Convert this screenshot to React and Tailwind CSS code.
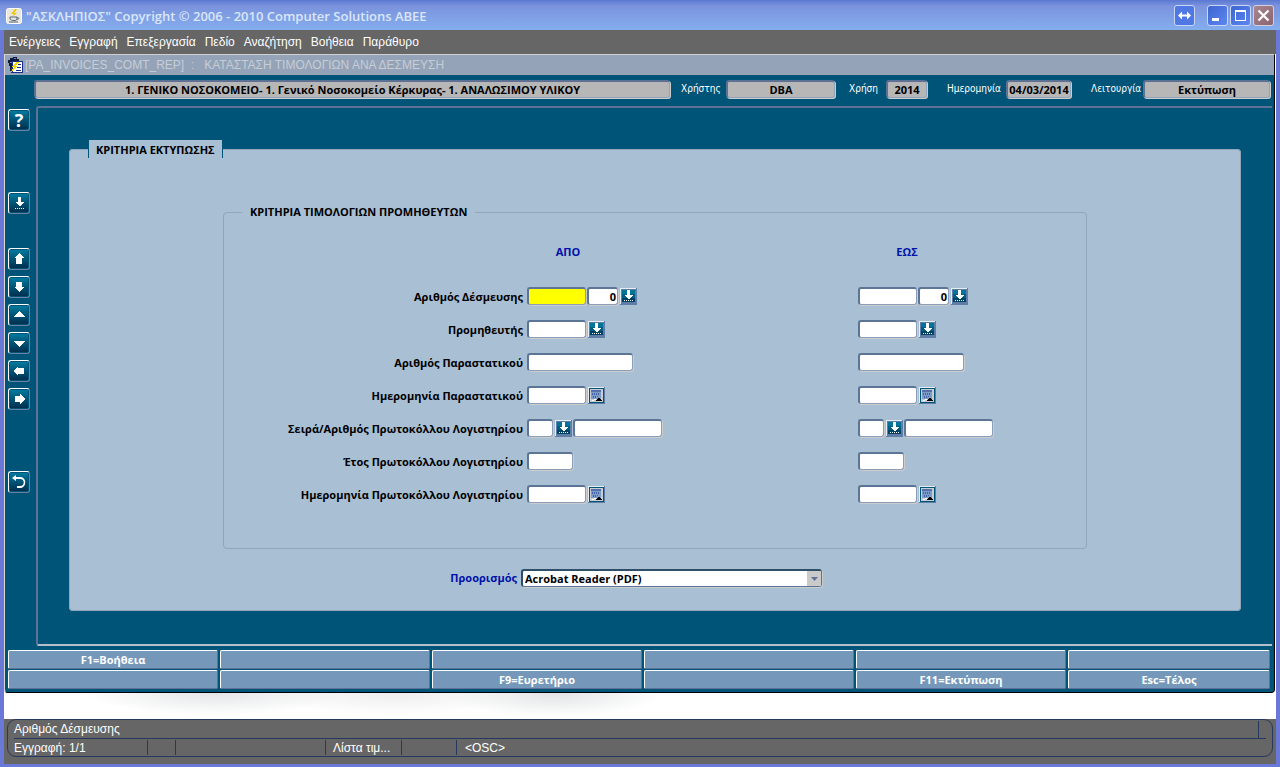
import { useState } from "react";

const MENU = ["Ενέργειες", "Εγγραφή", "Επεξεργασία", "Πεδίο", "Αναζήτηση", "Βοήθεια", "Παράθυρο"];

const FUNCTION_KEYS = [
  "F1=Βοήθεια", "", "", "", "", "",
  "", "", "F9=Ευρετήριο", "", "F11=Εκτύπωση", "Esc=Τέλος",
];

const ROWS = [
  { id: "commitment", label: "Αριθμός Δέσμευσης", parts: ["code", "count", "list"] },
  { id: "supplier", label: "Προμηθευτής", parts: ["code", "list"] },
  { id: "document", label: "Αριθμός Παραστατικού", parts: ["number"] },
  { id: "documentDate", label: "Ημερομηνία Παραστατικού", parts: ["code", "calendar"] },
  { id: "protocol", label: "Σειρά/Αριθμός Πρωτοκόλλου Λογιστηρίου", parts: ["series", "list", "protocol"] },
  { id: "protocolYear", label: "Έτος Πρωτοκόλλου Λογιστηρίου", parts: ["year"] },
  { id: "protocolDate", label: "Ημερομηνία Πρωτοκόλλου Λογιστηρίου", parts: ["code", "calendar"] },
];

const FIELD_WIDTHS = {
  code: "w-[59px]",
  count: "w-[31px]",
  number: "w-[106px]",
  series: "w-[26px]",
  protocol: "w-[89px]",
  year: "w-[46px]",
};

const SIDE_ICONS = {
  list: (
    <>
      <path d="M10 5h3v5h3l-4.500 4.500L7 10h3z" />
      <path d="M7 16h1v1H7zM9 16h1v1H9zM11 16h1v1h-1zM13 16h1v1h-1zM15 16h1v1h-1z" />
    </>
  ),
  up: <path d="M11 5l5 5h-2v6H8v-6H6z" />,
  down: <path d="M8 6h6v5h2l-5 5-5-5h2z" />,
  pageUp: <path d="M11 7l6 6H5z" />,
  pageDown: <path d="M5 9h12l-6 6z" />,
  left: <path d="M5 11l5-5v2h6v6h-6v2z" />,
  right: <path d="M17 11l-5-5v2H7v6h5v2z" />,
  back: <path d="M4 7l4-3v2h4c7 0 7 11 0 11H9v-2h3c5 0 5-7 0-7H8v2z" />,
};

function SideButton({ label, icon }) {
  return (
    <button
      type="button"
      aria-label={label}
      className="flex h-[22px] w-[22px] items-center justify-center rounded-[3px] border border-t-white border-l-white border-r-[#6f7fa0] border-b-[#6f7fa0] bg-[#00547a] p-px"
    >
      <span className="flex h-[18px] w-[18px] items-center justify-center bg-linear-to-b from-[#007a9e] to-[#00304f] text-lg font-bold text-white">
        {icon === "help" ? (
          "?"
        ) : (
          <svg viewBox="2 2 18 18" className="h-[18px] w-[18px]" fill="#fff" shapeRendering={icon === "back" ? "auto" : "crispEdges"}>
            {SIDE_ICONS[icon]}
          </svg>
        )}
      </span>
    </button>
  );
}

function InfoField({ id, label, value, width }) {
  return (
    <>
      {label && (
        <label htmlFor={id} className="font-['DejaVu_Sans_Condensed','DejaVu_Sans',sans-serif] text-[10px] text-white">
          {label}
        </label>
      )}
      <input
        id={id}
        aria-label={label || "Τμήμα"}
        readOnly
        value={value}
        className={`h-[18px] rounded-[3px] border-t-2 border-l-2 border-r border-b border-t-[#5c7194] border-l-[#5c7194] border-r-[#93a4bd] border-b-[#93a4bd] bg-[#b7b7b7] text-center font-bold text-black shadow-[1px_1px_0_#cccccc] ${width}`}
      />
    </>
  );
}

function ListButton({ label }) {
  return (
    <button type="button" aria-label={label} className="mx-px mt-px h-[17px] w-[17px]">
      <svg viewBox="0 0 17 17" className="h-[17px] w-[17px]" shapeRendering="crispEdges">
        <path d="M0 0h17v17H0z" fill="#5f7da6" />
        <path d="M0 0h16v1H1v15H0z" fill="#e6eef5" />
        <path d="M2 2h13v5H2z" fill="#007499" />
        <path d="M2 6h13v5H2z" fill="#005d84" />
        <path d="M2 10h13v4H2z" fill="#004264" />
        <path d="M7 2h3v5h3l-4.500 4.500L4 7h3z" fill="#fff" />
        <path d="M4 12h1v1H4zM6 12h1v1H6zM8 12h1v1H8zM10 12h1v1h-1zM12 12h1v1h-1z" fill="#fff" />
      </svg>
    </button>
  );
}

function CalendarButton({ label }) {
  return (
    <button type="button" aria-label={label} className="mx-px mt-px h-[17px] w-[17px]">
      <svg viewBox="0 0 17 17" className="h-[17px] w-[17px]" shapeRendering="crispEdges">
        <path d="M0 0h17v17H0z" fill="#5f7da6" />
        <path d="M0 0h16v1H1v15H0z" fill="#e6eef5" />
        <path d="M1 1h15v15H1z" fill="#005478" />
        <path d="M2 2h13v13H2z" fill="#c9cdd2" />
        <path d="M3 3h10v9H3z" fill="#7d9cc8" />
        <path d="M3 3h10v2H3z" fill="#5470ad" />
        <path d="M4 6h1v2H4zM6 6h1v2H6zM8 6h1v2H8zM10 6h1v2h-1zM5 9h1v2H5zM7 9h1v2H7zM9 9h1v1H9z" fill="#4665a8" />
        <path d="M7 14l3.500-3.500L14 14z" fill="#000" />
        <path d="M6 12h2v1H6zM4 13h2v1H4z" fill="#fff" />
      </svg>
    </button>
  );
}

function RangeCell({ row, side, values, onChange }) {
  return (
    <div className="flex h-[19px] items-start">
      {row.parts.map((part, i) => {
        const key = `${row.id}-${side}-${part}`;
        if (part === "list") return <ListButton key={key} label={`Λίστα ${row.label}`} />;
        if (part === "calendar") return <CalendarButton key={key} label={`Ημερολόγιο ${row.label}`} />;
        const active = key === "commitment-from-code";
        return (
          <input
            key={key}
            id={i === 0 ? `${row.id}-${side}` : key}
            aria-label={`${row.label} ${side === "from" ? "ΑΠΟ" : "ΕΩΣ"}`}
            value={values[key] ?? (part === "count" ? "0" : "")}
            onChange={(e) => onChange(key, e.target.value)}
            className={`mr-px h-[18px] rounded-[3px] border-t-2 border-l-2 border-r border-b border-t-[#5c7597] border-l-[#5c7597] border-r-[#8b9db8] border-b-[#8b9db8] px-px text-right font-bold text-black shadow-[1px_1px_0_#cccccc] outline-none ${active ? "bg-[#ffff00]" : "bg-white"} ${FIELD_WIDTHS[part]}`}
          />
        );
      })}
    </div>
  );
}

function TitleBar() {
  return (
    <header className="flex h-[30px] items-center bg-linear-to-b from-[#5a78d0] via-[#7b93dd] via-20% to-[#84aeee] pt-px pr-[6px] pl-[6px]">
      <svg viewBox="0 0 16 16" className="mr-1 h-4 w-4" aria-hidden="true">
        <rect x="0.500" y="0.500" width="15" height="15" rx="2" fill="#e9e6dc" stroke="#fff" />
        <path d="M9 1L5 6h3L6 9l5-4H8l3-4z" fill="#f2c400" />
        <path d="M4 9h7v2c0 2-6 2-7 0zM11 9.500c3 0 2 2-.5 2" fill="none" stroke="#53647e" />
        <path d="M3 14h9" stroke="#53647e" />
      </svg>
      <h1 className="flex-1 text-[13px] font-semibold text-[#dbe6fb]">
        "ΑΣΚΛΗΠΙΟΣ" Copyright © 2006 - 2010 Computer Solutions ABEE
      </h1>
      <div className="flex gap-[2px]">
        <button type="button" aria-label="Μετακίνηση" className="mr-[10px] h-[21px] w-[21px] rounded-[3px] border border-[#c9d6f5] bg-[#4f78e2]">
          <svg viewBox="0 0 19 19" className="h-[19px] w-[19px]" fill="#fff">
            <path d="M3 9.500l4-4v3h5v-3l4 4-4 4v-3H7v3z" />
          </svg>
        </button>
        <button type="button" aria-label="Ελαχιστοποίηση" className="h-[21px] w-[21px] rounded-[3px] border border-[#c9d6f5] bg-linear-to-br from-[#3f66d0] to-[#5c86f0]">
          <svg viewBox="0 0 19 19" className="h-[19px] w-[19px]" fill="#fff">
            <path d="M4 12h7v3H4z" />
          </svg>
        </button>
        <button type="button" aria-label="Μεγιστοποίηση" className="h-[21px] w-[21px] rounded-[3px] border border-[#c9d6f5] bg-linear-to-br from-[#3f66d0] to-[#5c86f0]">
          <svg viewBox="0 0 19 19" className="h-[19px] w-[19px]" fill="#fff">
            <path d="M4 4h11v11H4zM5 6v8h9V6z" fillRule="evenodd" />
          </svg>
        </button>
        <button type="button" aria-label="Κλείσιμο" className="h-[21px] w-[21px] rounded-[3px] border border-[#d3cfdc] bg-linear-to-br from-[#a9868f] to-[#8a6470]">
          <svg viewBox="0 0 19 19" className="h-[19px] w-[19px]" stroke="#fff" strokeWidth="2.200">
            <path d="M4.500 4.500l10 10M14.500 4.500l-10 10" />
          </svg>
        </button>
      </div>
    </header>
  );
}

function SideBar() {
  return (
    <nav className="flex w-[31px] flex-col items-start pt-[3px] pl-[3px]">
      <SideButton label="Βοήθεια" icon="help" />
      <div className="mt-[61px]">
        <SideButton label="Λίστα" icon="list" />
      </div>
      <div className="mt-[34px] flex flex-col gap-[6px]">
        <SideButton label="Προηγούμενη εγγραφή" icon="up" />
        <SideButton label="Επόμενη εγγραφή" icon="down" />
        <SideButton label="Προηγούμενη σελίδα" icon="pageUp" />
        <SideButton label="Επόμενη σελίδα" icon="pageDown" />
        <SideButton label="Προηγούμενο πεδίο" icon="left" />
        <SideButton label="Επόμενο πεδίο" icon="right" />
      </div>
      <div className="mt-[61px]">
        <SideButton label="Επιστροφή" icon="back" />
      </div>
    </nav>
  );
}

function StatusBar() {
  return (
    <footer className="bg-[#666666] px-[3px] pb-[7px] font-['Liberation_Sans',sans-serif] text-xs text-white">
      <div className="rounded-[9px] border border-[#26385c] px-[6px]">
        <div className="flex h-[19px] border-b border-[#26385c]">
          <span className="flex-1 leading-[19px]">Αριθμός Δέσμευσης</span>
          <span className="mt-px mr-[7px] border-r border-[#26385c]" />
        </div>
        <div className="flex h-[17px] items-stretch py-px leading-4">
          <span className="w-[134px] border-r border-[#26385c]">Εγγραφή: 1/1</span>
          <span className="w-7 border-r border-[#26385c]" />
          <span className="w-[150px] border-r border-[#26385c]" />
          <span className="w-[76px] border-r border-[#26385c] pl-[7px]">Λίστα τιμ...</span>
          <span className="w-[55px] border-r border-[#26385c]" />
          <span className="pl-2">&lt;OSC&gt;</span>
        </div>
      </div>
    </footer>
  );
}

export default function App() {
  const [values, setValues] = useState({});
  const [target, setTarget] = useState("pdf");
  const change = (key, value) => setValues({ ...values, [key]: value });

  return (
    <div className="flex min-h-screen flex-col bg-[#6a78d8] font-['Open_Sans',sans-serif] text-[11px] leading-4">
      <TitleBar />
      <div className="mx-1 mb-[3px] flex flex-1 flex-col bg-white">
        <nav className="flex h-6 items-center gap-[9px] bg-[#666666] pl-[5px] font-['Liberation_Sans',sans-serif] text-xs text-white">
          {MENU.map((item) => (
            <button key={item} type="button">
              {item}
            </button>
          ))}
        </nav>

        <section className="mr-px overflow-hidden rounded-b-[4px] border-t border-r border-b border-l border-t-[#d0d0d0] border-r-black border-b-black border-l-[#d8d8d0] bg-[#005478]">
          <h2 className="flex h-5 items-center bg-[#94a3b8] pl-[2px] font-['Liberation_Sans',sans-serif] text-xs whitespace-pre text-[#c6cdd6]">
            <svg viewBox="0 0 16 16" className="mr-[2px] h-4 w-4" aria-hidden="true" shapeRendering="crispEdges">
              <path d="M1 3h2V1h3V0h4v2h2v3H7v9H3V9H2V6H1z" fill="#111a38" />
              <path d="M3 5h3v1H3zM7 1h2v1H7z" fill="#5c86c8" />
              <path d="M5 4h11v12H4v-5h1z" fill="#1a2f8c" />
              <path d="M6 5h9v10H6z" fill="#fff" />
              <path d="M11 7h3v1h-3zM10 10h4v1h-4zM9 13h5v1H9z" fill="#1a2f8c" />
              <path d="M10 5L4 10h3l-3 5 7-6H8l4-4z" fill="#f5d800" />
            </svg>
            {"[PA_INVOICES_COMT_REP]  :   ΚΑΤΑΣΤΑΣΗ ΤΙΜΟΛΟΓΙΩΝ ΑΝΑ ΔΕΣΜΕΥΣΗ"}
          </h2>

          <div className="flex h-[31px] items-center pr-[4px] pb-[3px] pl-[29px]">
            <InfoField
              id="unit"
              value="1. ΓΕΝΙΚΟ ΝΟΣΟΚΟΜΕΙΟ- 1. Γενικό Νοσοκομείο Κέρκυρας- 1. ΑΝΑΛΩΣΙΜΟΥ ΥΛΙΚΟΥ"
              width="min-w-0 flex-1"
            />
            <div className="ml-[11px] flex w-[154px] items-center justify-between">
              <InfoField id="user" label="Χρήστης" value="DBA" width="w-[109px]" />
            </div>
            <div className="ml-[14px] flex w-[78px] items-center justify-between">
              <InfoField id="year" label="Χρήση" value="2014" width="w-[41px]" />
            </div>
            <div className="ml-5 flex w-[124px] items-center justify-between">
              <InfoField id="date" label="Ημερομηνία" value="04/03/2014" width="w-[65px]" />
            </div>
            <div className="ml-5 flex w-[179px] items-center justify-between">
              <InfoField id="mode" label="Λειτουργία" value="Εκτύπωση" width="w-[127px]" />
            </div>
          </div>

          <div className="flex">
            <SideBar />
            <main className="mr-[2px] flex-1 rounded-l-[3px] border-t-2 border-b-2 border-l-2 border-t-[#5f7295] border-b-[#b4bfcc] border-l-[#5f7295] px-[31px] pt-8 pb-[33px]">
              <fieldset className="rounded-[4px] border border-[#93a5ba] bg-[#a9bfd4] pb-[23px]">
                <legend className="ml-[18px] h-[18px] border-x border-[#005478] bg-[#a9bfd4] px-[7px] leading-5 font-bold text-black">
                  ΚΡΙΤΗΡΙΑ ΕΚΤΥΠΩΣΗΣ
                </legend>

                <fieldset className="mx-auto mt-[46px] w-full max-w-[864px] rounded-[4px] border border-[#93a5ba] pb-11">
                  <legend className="ml-[18px] px-2 leading-4 font-bold text-black">
                    ΚΡΙΤΗΡΙΑ ΤΙΜΟΛΟΓΙΩΝ ΠΡΟΜΗΘΕΥΤΩΝ
                  </legend>
                  <div className="mt-6 grid grid-cols-[303fr_331fr_228fr] gap-y-[14px]">
                    <span />
                    <span className="mb-[13px] w-[82px] text-center font-bold text-[#0011aa]">ΑΠΟ</span>
                    <span className="mb-[13px] w-[98px] text-center font-bold text-[#0011aa]">ΕΩΣ</span>
                    {ROWS.map((row) => (
                      <div key={row.id} className="contents">
                        <label htmlFor={`${row.id}-from`} className="pr-1 text-right leading-[19px] font-bold whitespace-nowrap text-black">
                          {row.label}
                        </label>
                        <RangeCell row={row} side="from" values={values} onChange={change} />
                        <RangeCell row={row} side="to" values={values} onChange={change} />
                      </div>
                    ))}
                  </div>
                </fieldset>

                <div className="mx-auto mt-5 flex w-full max-w-[864px] items-center">
                  <label htmlFor="target" className="w-[294px] text-right font-bold text-[#0011aa]">
                    Προορισμός
                  </label>
                  <div className="relative ml-1 w-[301px]">
                    <select
                      id="target"
                      value={target}
                      onChange={(e) => setTarget(e.target.value)}
                      className="block h-[18px] w-full appearance-none rounded-[3px] border-t-2 border-l-2 border-r border-b border-t-[#2f4f68] border-l-[#2f4f68] border-r-[#5c7597] border-b-[#5c7597] bg-white pl-[2px] leading-[15px] font-bold text-black shadow-[1px_1px_0_#cccccc] outline-none"
                    >
                      <option value="pdf">Acrobat Reader (PDF)</option>
                    </select>
                    <span className="pointer-events-none absolute top-[2px] right-px flex h-[15px] w-[14px] items-center justify-center bg-[#cacaca]">
                      <svg viewBox="0 0 7 4" className="h-1 w-[7px]" fill="#5f7397">
                        <path d="M0 0h7L3.500 4z" />
                      </svg>
                    </span>
                  </div>
                </div>
              </fieldset>
            </main>
          </div>

          <div className="mt-1 grid grid-cols-[repeat(5,210fr)_202fr] gap-x-[2px] gap-y-px pr-1 pb-[3px] pl-[3px]">
            {FUNCTION_KEYS.map((label, i) => (
              <button
                key={i}
                type="button"
                aria-label={label || "Κενό πλήκτρο"}
                className="h-[19px] rounded-[2px] border border-t-white border-l-white border-r-[#5f7295] border-b-[#5f7295] bg-[#7598ba] leading-4 font-bold text-white"
              >
                {label}
              </button>
            ))}
          </div>
        </section>

        <div className="min-h-[26px] flex-1 bg-[radial-gradient(ellipse_130px_22px_at_210px_0,#e3e5e6,transparent),radial-gradient(ellipse_130px_22px_at_390px_0,#ededed,transparent),radial-gradient(ellipse_110px_24px_at_550px_0,#e0e3e4,transparent)]" />
        <StatusBar />
      </div>
    </div>
  );
}
